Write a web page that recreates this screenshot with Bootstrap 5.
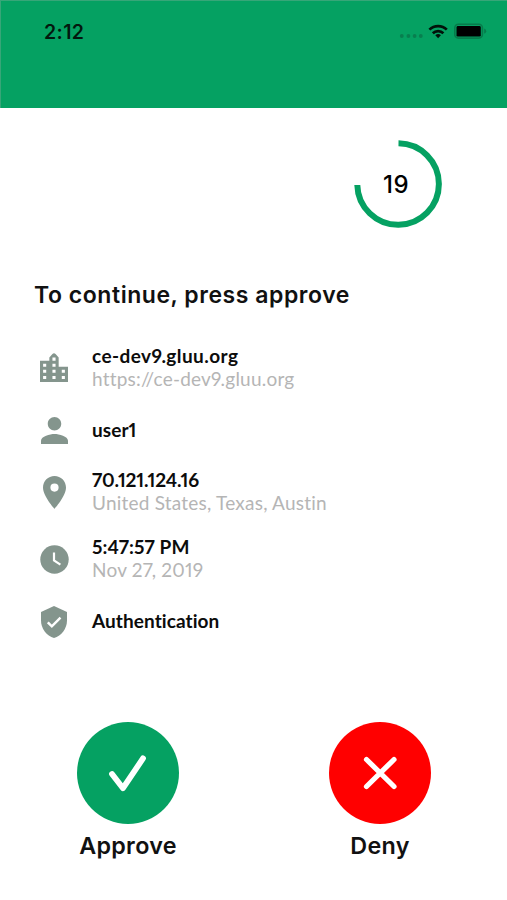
<!DOCTYPE html>
<html lang="en">
<head>
<meta charset="utf-8">
<meta name="viewport" content="width=device-width, initial-scale=1">
<title>Approve sign-in</title>
<link href="https://cdn.jsdelivr.net/npm/bootstrap@5.3.0/dist/css/bootstrap.min.css" rel="stylesheet">
<style>
body{font-family:Inter,"Liberation Sans",sans-serif;color:#111;background:#fff}
.screen{width:507px;height:900px;overflow:hidden}
.topbar{height:108px;background:#05a162;border-top:1px solid #37a678;border-left:1px solid #37a678;padding:18px 20px 0 43px}
.clock{font-size:19.5px;font-weight:600;line-height:26px;color:#03180e;letter-spacing:.4px}
.timer-row{height:120px;padding:32px 65px 0 0}
.timer{width:88px;height:88px}
.timer-num{font-size:24px;font-weight:500;color:#000;left:-2px;top:1px;letter-spacing:.4px}
.headline{font-size:23px;font-weight:600;line-height:32px;margin:51px 0 0 34px;letter-spacing:.55px}
.info{padding:33px 0 0 38px}
.item{height:49px}
.item-one{height:25px}
.gap-wide{margin-top:25px}
.gap-narrow{margin-top:18px}
.pic{width:32px;height:49px;margin-right:22px}
.pic-building{padding-bottom:2px}
.pic svg{fill:#84958d}
.txt{font-family:Lato,"Liberation Sans",sans-serif;white-space:nowrap;font-variant-ligatures:none;font-variant-numeric:proportional-nums;padding-bottom:4px}
.item-one .txt{padding-bottom:3px}
.main-line{font-size:19px;font-weight:700;line-height:23px;color:#0c0c0c;letter-spacing:.08px}
.host{letter-spacing:.42px}
.ip{letter-spacing:-.17px}
.sub-line{font-size:19px;line-height:23px;color:#b5b5b5;letter-spacing:.22px}
.choice{width:102px}
.round{width:102px;height:102px;border:0;padding:0}
.approve{background:#05a162}
.deny{background:#f00}
.choice-label{font-size:23.3px;font-weight:600;line-height:28px;margin-top:8px;letter-spacing:.3px}
.choices{padding:0 76px 0 77px;margin-top:88px}
</style>
<script src="https://cdn.jsdelivr.net/npm/bootstrap@5.3.0/dist/js/bootstrap.bundle.min.js"></script>
</head>
<body>
<main class="screen d-flex flex-column">
  <header class="topbar d-flex justify-content-between align-items-start">
    <span class="clock">2:12</span>
    <svg width="88" height="26" viewBox="399 19 88 26">
      <g fill="#087f4f"><circle cx="401.8" cy="36" r="1.9"/><circle cx="408.4" cy="36" r="1.9"/><circle cx="414.6" cy="36" r="1.9"/><circle cx="420.8" cy="36" r="1.9"/></g>
      <g fill="none" stroke="#02120a" stroke-width="2.7"><path d="M429.4 29.6a12.4 12.4 0 0 1 17.4 0"/><path d="M432.8 33.2a7.6 7.6 0 0 1 10.6 0"/></g>
      <path d="M438.1 38.2l-2.8-2.9a4 4 0 0 1 5.6 0z" fill="#02120a"/>
      <rect x="454.8" y="24.3" width="27.6" height="13.8" rx="3.6" fill="none" stroke="#077b4b" stroke-width="1.6"/>
      <rect x="456.5" y="26" width="24.3" height="10.6" rx="1.4" fill="#000"/>
      <path d="M484.2 28.6q2 .8 2 2.6t-2 2.6z" fill="#077b4b"/>
    </svg>
  </header>
  <section class="timer-row d-flex justify-content-end">
    <div class="timer position-relative d-flex align-items-center justify-content-center">
      <svg class="position-absolute top-0 start-0" width="88" height="88" viewBox="0 0 88 88"><path d="M44.5 3.2A40.8 40.8 0 1 1 3.3 45" fill="none" stroke="#05a162" stroke-width="6"/></svg>
      <span class="timer-num position-relative">19</span>
    </div>
  </section>
  <h1 class="headline">To continue, press approve</h1>
  <section class="info d-flex flex-column">
    <div class="item d-flex align-items-center">
      <div class="pic pic-building d-flex align-items-center justify-content-center"><svg width="28" height="29" viewBox="3 2 18 19" preserveAspectRatio="none"><path d="M15 11V5l-2-2.4q-1-.9-2 0L9 5v2H3v14h18V11h-6zm-8 8H5v-2h2v2zm0-4H5v-2h2v2zm0-4H5V9h2v2zm6 8h-2v-2h2v2zm0-4h-2v-2h2v2zm0-4h-2V9h2v2zm0-4h-2V5h2v2zm6 12h-2v-2h2v2zm0-4h-2v-2h2v2z"/></svg></div>
      <div class="txt"><div class="main-line host">ce-dev9.gluu.org</div><div class="sub-line">https://ce-dev9.gluu.org</div></div>
    </div>
    <div class="item item-one gap-wide d-flex align-items-center">
      <div class="pic d-flex align-items-center justify-content-center"><svg width="27" height="27" viewBox="4 4 16 16"><path d="M12 12c2.21 0 4-1.79 4-4s-1.79-4-4-4-4 1.79-4 4 1.79 4 4 4zm0 2c-2.67 0-8 1.34-8 4v2h16v-2c0-2.66-5.33-4-8-4z"/></svg></div>
      <div class="txt main-line">user1</div>
    </div>
    <div class="item gap-wide d-flex align-items-center">
      <div class="pic d-flex align-items-center justify-content-center"><svg width="23" height="33" viewBox="5 2 14 20"><path d="M12 2C8.13 2 5 5.13 5 9c0 5.25 7 13 7 13s7-7.75 7-13c0-3.87-3.13-7-7-7zm0 9.5a2.5 2.5 0 0 1 0-5 2.5 2.5 0 0 1 0 5z"/></svg></div>
      <div class="txt"><div class="main-line ip">70.121.124.16</div><div class="sub-line">United States, Texas, Austin</div></div>
    </div>
    <div class="item gap-narrow d-flex align-items-center">
      <div class="pic d-flex align-items-center justify-content-center"><svg width="29" height="29" viewBox="0 0 29 29"><circle cx="14.5" cy="14.5" r="14.2"/><path d="M14 7.5v7.9l6.4 4.2" fill="none" stroke="#fff" stroke-width="2.2"/></svg></div>
      <div class="txt"><div class="main-line">5:47:57 PM</div><div class="sub-line">Nov 27, 2019</div></div>
    </div>
    <div class="item item-one gap-wide d-flex align-items-center">
      <div class="pic d-flex align-items-center justify-content-center"><svg width="26" height="32" viewBox="3 1 18 22"><path d="M12 1L3 5v6c0 5.55 3.84 10.74 9 12 5.16-1.26 9-6.45 9-12V5l-9-4z"/><path d="M7.7 12.2l2.8 2.8 6-6" fill="none" stroke="#fff" stroke-width="1.7"/></svg></div>
      <div class="txt main-line">Authentication</div>
    </div>
  </section>
  <section class="choices d-flex justify-content-between">
    <div class="choice d-flex flex-column align-items-center">
      <button class="round approve rounded-circle" type="button" aria-label="Approve"><svg class="d-block" width="102" height="102" viewBox="77 722 102 102"><path d="M112 774l11 14.2 20-29.8" fill="none" stroke="#fff" stroke-width="5.8" stroke-linecap="round" stroke-linejoin="round"/></svg></button>
      <div class="choice-label">Approve</div>
    </div>
    <div class="choice d-flex flex-column align-items-center">
      <button class="round deny rounded-circle" type="button" aria-label="Deny"><svg class="d-block" width="102" height="102" viewBox="329 722 102 102"><path d="M366.5 759.5l27.5 27M394 759.5l-27.5 27" fill="none" stroke="#fff" stroke-width="5.2" stroke-linecap="round"/></svg></button>
      <div class="choice-label">Deny</div>
    </div>
  </section>
</main>
</body>
</html>
